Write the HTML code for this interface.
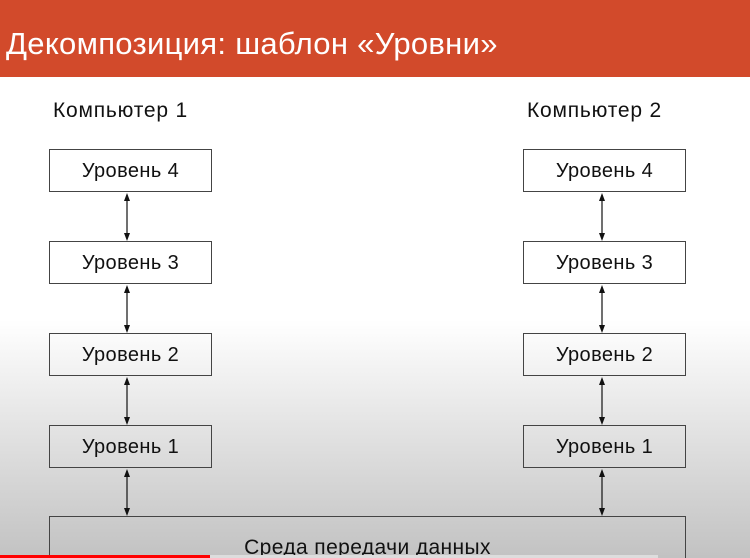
<!DOCTYPE html>
<html style="overflow:hidden;height:558px"><head><meta charset="utf-8"><style>
body{margin:0;width:750px;height:558px;overflow:hidden;position:relative;font-family:"Liberation Sans","DejaVu Sans",sans-serif;
background:linear-gradient(#fff 0,#fff 320px,#c2c2c2 558px);}
.hd{position:absolute;left:0;top:0;width:750px;height:77px;background:#d24a2b;}
.hd span{position:absolute;left:6px;top:26px;font-size:31px;color:#fff;letter-spacing:0.3px;white-space:nowrap;}
.lbl{position:absolute;font-size:21px;color:#111;letter-spacing:0.8px;}
.b{position:absolute;width:163px;height:43px;border:1px solid #444;box-sizing:border-box;font-size:20px;letter-spacing:0.4px;text-align:center;line-height:43px;color:#111;}
svg{position:absolute;left:0;top:0}
</style></head><body>
<div class="hd"><span>Декомпозиция: шаблон «Уровни»</span></div>
<div class="lbl" style="left:53px;top:99px">Компьютер 1</div>
<div class="lbl" style="left:527px;top:99px">Компьютер 2</div>
<div class="b" style="left:49px;top:149px">Уровень 4</div>
<div class="b" style="left:49px;top:241px">Уровень 3</div>
<div class="b" style="left:49px;top:333px">Уровень 2</div>
<div class="b" style="left:49px;top:425px">Уровень 1</div>
<div class="b" style="left:523px;top:149px">Уровень 4</div>
<div class="b" style="left:523px;top:241px">Уровень 3</div>
<div class="b" style="left:523px;top:333px">Уровень 2</div>
<div class="b" style="left:523px;top:425px">Уровень 1</div>
<div class="b" style="left:49px;top:516px;width:637px;height:50px;line-height:62px;font-size:21px">Среда передачи данных</div>
<svg width="750" height="558">
<g stroke="#111" stroke-width="1.2">
<line x1="127" y1="195" x2="127" y2="238"/><line x1="127" y1="287" x2="127" y2="330"/>
<line x1="127" y1="379" x2="127" y2="422"/><line x1="127" y1="471" x2="127" y2="513"/>
<line x1="602" y1="195" x2="602" y2="238"/><line x1="602" y1="287" x2="602" y2="330"/>
<line x1="602" y1="379" x2="602" y2="422"/><line x1="602" y1="471" x2="602" y2="513"/>
</g>
<g fill="#111">
<path d="M127,193 l-3,8 h6z M127,241 l-3,-8 h6z M127,285 l-3,8 h6z M127,333 l-3,-8 h6z M127,377 l-3,8 h6z M127,425 l-3,-8 h6z M127,469 l-3,8 h6z M127,516 l-3,-8 h6z"/>
<path d="M602,193 l-3,8 h6z M602,241 l-3,-8 h6z M602,285 l-3,8 h6z M602,333 l-3,-8 h6z M602,377 l-3,8 h6z M602,425 l-3,-8 h6z M602,469 l-3,8 h6z M602,516 l-3,-8 h6z"/>
</g>
<rect x="0" y="555" width="210" height="3" fill="#f00"/>
<rect x="210" y="555" width="448" height="3" fill="#ddd"/>
</svg>
</body></html>
